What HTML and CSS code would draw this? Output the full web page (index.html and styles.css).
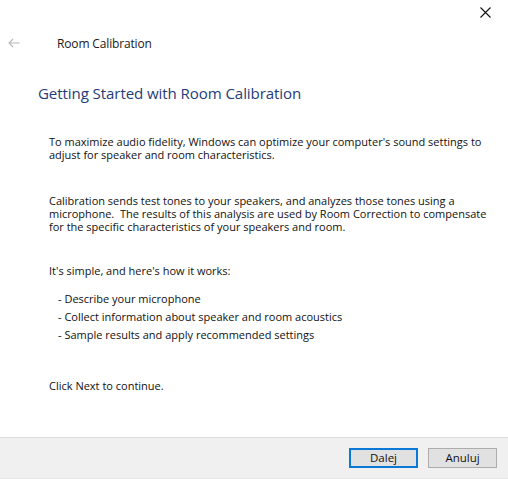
FILE: index.html
```html
<!DOCTYPE html>
<html>
<head>
<meta charset="utf-8">
<link rel="stylesheet" href="styles.css">
</head>
<body>
<div class="window">
  <div class="titlebar">
    <button class="close" aria-label="Close">
      <svg width="11" height="11" viewBox="0 0 11 11"><path d="M0.5 0.5 L10.5 10.5 M10.5 0.5 L0.5 10.5" stroke="#111" stroke-width="1.1" fill="none"/></svg>
    </button>
  </div>
  <div class="navbar">
    <span class="back">
      <svg width="12" height="10" viewBox="0 0 12 10"><path d="M11.5 5 H1 M5 1 L1 5 L5 9" stroke="#b8b8b8" stroke-width="1.1" fill="none"/></svg>
    </span>
    <span class="apptitle">Room Calibration</span>
  </div>
  <main class="content">
    <h1 class="heading">Getting Started with Room Calibration</h1>
    <p class="para p1">To maximize audio fidelity, Windows can optimize your computer's sound settings to adjust for speaker and room characteristics.</p>
    <p class="para p2">Calibration sends test tones to your speakers, and analyzes those tones using a microphone.&nbsp; The results of this analysis are used by Room Correction to compensate for the specific characteristics of your speakers and room.</p>
    <p class="para p3">It's simple, and here's how it works:</p>
    <ul class="steps">
      <li>- Describe your microphone</li>
      <li>- Collect information about speaker and room acoustics</li>
      <li>- Sample results and apply recommended settings</li>
    </ul>
    <p class="para p4">Click Next to continue.</p>
  </main>
  <footer class="footer">
    <button class="btn primary">Dalej</button>
    <button class="btn">Anuluj</button>
  </footer>
</div>
</body>
</html>
```
FILE: styles.css
```css
* { box-sizing: border-box; }
html, body { margin: 0; padding: 0; }
body {
  width: 508px;
  height: 479px;
  background: #ffffff;
  font-family: "Open Sans", "Noto Sans", sans-serif;
  color: #111;
  overflow: hidden;
}
.window {
  width: 508px;
  height: 479px;
  display: flex;
  flex-direction: column;
}
.titlebar {
  height: 25px;
  display: flex;
  justify-content: flex-end;
  align-items: center;
}
.close {
  width: 46px;
  height: 25px;
  border: 0;
  background: transparent;
  display: flex;
  align-items: center;
  justify-content: center;
  padding: 0;
}
.navbar {
  height: 36px;
  display: flex;
  align-items: center;
  padding-left: 8px;
}
.back {
  width: 49px;
  display: flex;
  align-items: center;
}
.back svg { display: block; }
.apptitle {
  font-size: 12px;
  color: #1a1a1a;
  letter-spacing: -0.15px;
}
.content {
  flex: 1;
  padding-left: 38px;
  padding-right: 10px;
}
.heading {
  margin: 21px 0 0 0;
  font-size: 15.1px;
  font-weight: normal;
  color: #1f3c78;
  line-height: 22px;
  letter-spacing: -0.1px;
}
.para {
  margin: 0;
  padding-left: 11px;
  font-size: 11px;
  line-height: 13px;
  color: #111;
  letter-spacing: 0;
}
.p1 { margin-top: 31px; width: 460px; }
.p2 { margin-top: 33px; width: 460px; }
.p3 { margin-top: 31px; }
.steps {
  list-style: none;
  margin: 13px 0 0 0;
  padding: 0 0 0 20px;
  font-size: 11px;
  line-height: 18px;
}
.p4 { margin-top: 35px; }
.footer {
  height: 42px;
  background: #f0f0f0;
  border-top: 1px solid #dcdcdc;
  border-bottom: 1px solid #e6e6e6;
  display: flex;
  justify-content: flex-end;
  align-items: center;
  gap: 10px;
  padding-right: 11px;
}
.btn {
  width: 69px;
  height: 20px;
  border: 1px solid #adadad;
  background: #e1e1e1;
  font-family: "Open Sans", "Noto Sans", sans-serif;
  font-size: 11.5px;
  color: #111;
  padding: 0;
  line-height: 16px;
}
.btn.primary {
  border: 2px solid #0a78d7;
  background: #e1e1e1;
}
```
